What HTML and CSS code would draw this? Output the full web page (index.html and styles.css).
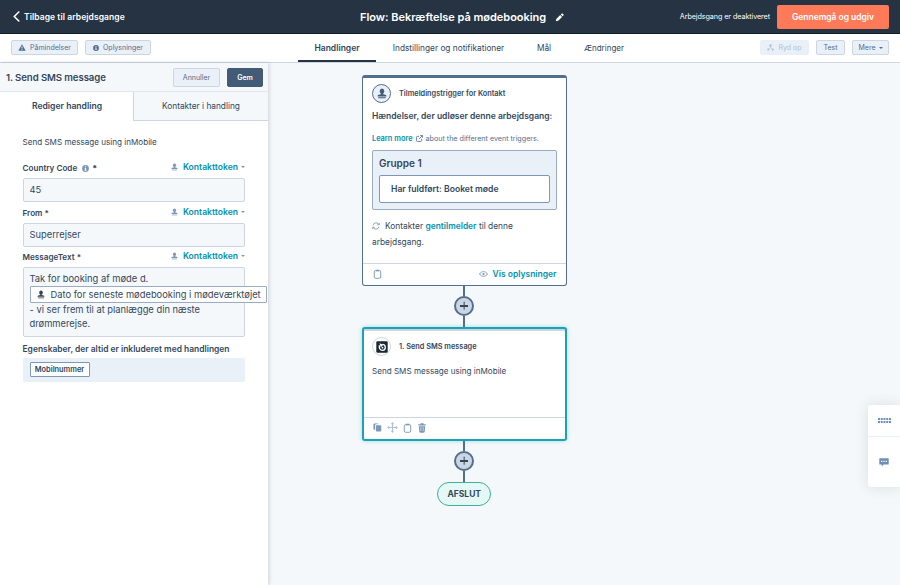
FILE: index.html
```html
<!DOCTYPE html>
<html lang="da">
<head>
    <meta charset="UTF-8">
    <meta name="viewport" content="width=device-width, initial-scale=1.0">
    <title>Flow: Bekræftelse på mødebooking</title>
    <link rel="stylesheet" href="styles.css">
</head>
<body>
    <!-- Shared icons -->
    <svg class="sprite" width="0" height="0">
        <symbol id="person" viewBox="0 0 12 12">
            <ellipse cx="6" cy="3.200" rx="2.700" ry="3.100" fill="currentColor"/>
            <path d="M4.700 5.500h2.600v1.300l2.600.6c1 .3 1.400.8 1.400 2.100H.7c0-1.300.4-1.800 1.400-2.100l2.600-.6z" fill="currentColor"/>
            <path d="M1.500 10.500h9v1.200h-9z" fill="currentColor"/>
        </symbol>
        <symbol id="info" viewBox="0 0 12 12">
            <circle cx="6" cy="6" r="5.800" fill="currentColor"/>
            <path d="M5 2.300h2v1.700H5zM4.500 5h2.500v3.500h.8v1.200H4.300V8.500H5V6.200h-.5z" fill="#fff"/>
        </symbol>
        <symbol id="clipboard" viewBox="0 0 12 14">
            <rect x="1.500" y="2.300" width="9" height="10.700" rx="1.800" fill="none" stroke="currentColor" stroke-width="1.300"/>
            <path d="M3.500 1h5v2.200h-5z" fill="currentColor"/>
        </symbol>
    </svg>

    <header class="topbar">
        <a class="back" href="#">
            <svg width="7" height="11" viewBox="0 0 7 11"><path d="M5.800 1 1.300 5.500l4.500 4.500" fill="none" stroke="currentColor" stroke-width="1.600" stroke-linecap="round"/></svg>
            <span>Tilbage til arbejdsgange</span>
        </a>
        <h1 class="flow-title">
            <span>Flow: Bekræftelse på mødebooking</span>
            <svg width="9" height="9" viewBox="0 0 9 9"><path d="M.8 8.300l.5-2.400 3.900-3.900 1.900 1.900-3.900 3.900zM5.800 1.400l.7-.7c.4-.4.9-.4 1.300 0l.6.6c.4.4.4.9 0 1.300l-.7.7z" fill="currentColor"/></svg>
        </h1>
        <div class="publish">
            <span class="status">Arbejdsgang er deaktiveret</span>
            <button class="btn-publish">Gennemgå og udgiv</button>
        </div>
    </header>

    <nav class="subnav">
        <div class="subnav-left">
            <button class="btn btn-reminders">
                <svg width="8" height="7" viewBox="0 0 12 11"><path d="M6 .3 11.800 10.700H.2z" fill="currentColor"/><path d="M5.300 4h1.400v3.200H5.300zM5.300 8.200h1.400v1.400H5.300z" fill="#fff"/></svg>
                <span>Påmindelser</span>
            </button>
            <button class="btn btn-details">
                <svg width="6" height="6"><use href="#info"/></svg>
                <span>Oplysninger</span>
            </button>
        </div>
        <div class="tabs">
            <a class="tab tab-actions active" href="#"><span>Handlinger</span></a>
            <a class="tab tab-settings" href="#"><span>Indstillinger og notifikationer</span></a>
            <a class="tab tab-goals" href="#"><span>Mål</span></a>
            <a class="tab tab-changes" href="#"><span>Ændringer</span></a>
        </div>
        <div class="subnav-right">
            <button class="btn btn-clean" disabled>
                <svg width="7" height="7" viewBox="0 0 10 10"><g fill="currentColor"><circle cx="5" cy="2" r="1.800"/><circle cx="1.800" cy="8" r="1.600"/><circle cx="8.200" cy="8" r="1.600"/></g><path d="M5 2v3M1.800 8 5 5l3.200 3" fill="none" stroke="currentColor"/></svg>
                <span>Ryd op</span>
            </button>
            <button class="btn btn-test"><span>Test</span></button>
            <button class="btn btn-more"><span>Mere</span><i class="caret"></i></button>
        </div>
    </nav>

    <main class="workspace">
        <aside class="panel">
            <div class="panel-header">
                <h2>1. Send SMS message</h2>
                <button class="btn btn-cancel"><span>Annuller</span></button>
                <button class="btn btn-save"><span>Gem</span></button>
            </div>
            <div class="panel-tabs">
                <a class="panel-tab active" href="#"><span>Rediger handling</span></a>
                <a class="panel-tab" href="#"><span>Kontakter i handling</span></a>
            </div>
            <form class="panel-form">
                <p class="intro">Send SMS message using inMobile</p>

                <div class="field-label">
                    <label>Country Code</label>
                    <svg class="label-info" width="7" height="7"><use href="#info"/></svg>
                    <b>*</b>
                    <a class="token" href="#"><svg width="7" height="8"><use href="#person"/></svg><span>Kontakttoken</span><i class="caret"></i></a>
                </div>
                <div class="input input-code">45</div>

                <div class="field-label">
                    <label>From *</label>
                    <a class="token" href="#"><svg width="7" height="8"><use href="#person"/></svg><span>Kontakttoken</span><i class="caret"></i></a>
                </div>
                <div class="input">Superrejser</div>

                <div class="field-label">
                    <label>MessageText *</label>
                    <a class="token" href="#"><svg width="7" height="8"><use href="#person"/></svg><span>Kontakttoken</span><i class="caret"></i></a>
                </div>
                <div class="input message">
                    <p>Tak for booking af møde d.</p>
                    <div class="message-token"><svg width="8" height="9"><use href="#person"/></svg><span>Dato for seneste mødebooking i mødeværktøjet</span></div>
                    <p>- vi ser frem til at planlægge din næste</p>
                    <p>drømmerejse.</p>
                </div>

                <div class="field-label included">
                    <label>Egenskaber, der altid er inkluderet med handlingen</label>
                </div>
                <div class="properties"><span class="property">Mobilnummer</span></div>
            </form>
        </aside>

        <section class="canvas">
            <div class="flow">
                <article class="card trigger">
                    <div class="card-header">
                        <div class="avatar"><svg width="10" height="11"><use href="#person"/></svg></div>
                        <h3>Tilmeldingstrigger for Kontakt</h3>
                    </div>
                    <h4>Hændelser, der udløser denne arbejdsgang:</h4>
                    <p class="learn">
                        <a href="#">Learn more</a>
                        <svg width="7" height="7" viewBox="0 0 10 10" fill="none" stroke="currentColor" stroke-width="1.200"><path d="M4.500 2H2a1.200 1.200 0 0 0-1.200 1.200V8A1.200 1.200 0 0 0 2 9.200h4.800A1.200 1.200 0 0 0 8 8V5.500M6 .8h3.200V4M9.200.8 4.200 5.800"/></svg>
                        <span>about the different event triggers.</span>
                    </p>
                    <div class="group">
                        <h5>Gruppe 1</h5>
                        <div class="condition">Har fuldført: Booket møde</div>
                    </div>
                    <div class="reenroll">
                        <p>
                            <svg width="8" height="8" viewBox="0 0 10 10" fill="none" stroke="currentColor" stroke-width="1.100"><path d="M1.200 4.200A4 4 0 0 1 8 2.300L9 3.400M9 1v2.400H6.600M8.800 5.800A4 4 0 0 1 2 7.700L1 6.600M1 9V6.600h2.400"/></svg>
                            <span>Kontakter</span>
                            <a href="#">gentilmelder</a>
                            <span>til denne</span>
                        </p>
                        <p>arbejdsgang.</p>
                    </div>
                    <footer class="card-footer">
                        <svg width="9" height="10"><use href="#clipboard"/></svg>
                        <a class="details" href="#">
                            <svg width="9" height="6" viewBox="0 0 12 8"><path d="M.7 4C3.200-.2 8.800-.2 11.300 4 8.800 8.200 3.200 8.200.7 4z" fill="none" stroke="currentColor" stroke-width="1.200"/><circle cx="6" cy="4" r="1.500" fill="currentColor"/></svg>
                            <span>Vis oplysninger</span>
                        </a>
                    </footer>
                </article>

                <i class="line line-top"></i>
                <button class="plus" aria-label="+"></button>
                <i class="line"></i>

                <article class="card action">
                    <div class="card-header">
                        <div class="avatar logo">
                            <svg width="12" height="12" viewBox="0 0 12 12"><rect x=".3" y=".3" width="11.400" height="11.400" rx="1.200" fill="#192733"/><path d="M3.300 4.300C3 7.500 4.300 9.300 6.300 9.300c1.800 0 3-1.200 3-2.900 0-1.800-1.200-3-2.900-3" fill="none" stroke="#fff" stroke-width="1.300"/><path d="M3.500 2.300l3.800 1.500-2.500 2.400z" fill="#fff"/><circle cx="6.500" cy="6.700" r=".9" fill="#fff"/></svg>
                        </div>
                        <h3>1. Send SMS message</h3>
                    </div>
                    <p class="action-text">Send SMS message using inMobile</p>
                    <footer class="card-footer">
                        <svg width="9" height="9" viewBox="0 0 10 10"><path d="M1.500.5h4.300v1H3.500A1.200 1.200 0 0 0 2.300 2.700v4.800h-.8a1 1 0 0 1-1-1v-5a1 1 0 0 1 1-1z" fill="currentColor"/><rect x="3.200" y="2.400" width="6" height="7" rx="1" fill="currentColor"/></svg>
                        <svg class="move" width="11" height="11" viewBox="0 0 12 12"><path d="M6 1.500v9M1.500 6h9" stroke="currentColor" stroke-width="1.100"/><path d="M6 0l2 2.400H4zM6 12l2-2.400H4zM0 6l2.400-2v4zM12 6 9.600 4v4z" fill="currentColor"/></svg>
                        <svg width="9" height="10"><use href="#clipboard"/></svg>
                        <svg class="trash" width="8" height="10" viewBox="0 0 8 10"><path d="M2.600.3h2.800l.4 1h1.900v1.300H.3V1.300h1.900zM.8 3.200h6.400l-.5 5.500c-.1.7-.5 1-1.100 1H2.400c-.6 0-1-.3-1.100-1z" fill="currentColor"/><path d="M2.800 4.300v3.600M5.200 4.300v3.600" stroke="#fff" stroke-width=".6"/></svg>
                    </footer>
                </article>

                <i class="line line-top"></i>
                <button class="plus" aria-label="+"></button>
                <i class="line"></i>
                <div class="end"><span>AFSLUT</span></div>
            </div>
        </section>
    </main>

    <div class="dock">
        <div class="dock-grid"><svg width="13" height="5" viewBox="0 0 13 5"><path d="M0 1h13M0 4h13" stroke="currentColor" stroke-width="2" stroke-dasharray="2 .75"/></svg></div>
        <div class="dock-chat"><svg width="10" height="9" viewBox="0 0 10 9"><path d="M.8.3h8.400a.5.5 0 0 1 .5.5v5.200a.5.5 0 0 1-.5.5H4.600L2.700 8.600V6.500H.8a.5.5 0 0 1-.5-.5V.8A.5.5 0 0 1 .8.3z" fill="currentColor"/><path d="M2 3.400h1.300M4.300 3.400h1.300M6.600 3.400h1.300" stroke="#fff" stroke-width="1.200"/></svg></div>
    </div>
</body>
</html>
```

FILE: styles.css
```css
* {
    box-sizing: border-box;
}

body {
    margin: 0;
    height: 585px;
    overflow: hidden;
    display: flex;
    flex-direction: column;
    font-family: Inter, "Noto Sans", sans-serif;
    font-size: 8px;
    color: #33475b;
    background-color: #f4f8fa;
}

h1, h2, h3, h4, h5, p {
    margin: 0;
    white-space: nowrap;
}

a {
    color: inherit;
    text-decoration: none;
}

button {
    font-family: inherit;
    padding: 0;
    white-space: nowrap;
}

svg {
    flex: none;
    display: block;
}

span, label {
    white-space: nowrap;
}

.sprite {
    position: absolute;
}

/* Top bar */
.topbar {
    height: 34px;
    flex: none;
    display: grid;
    grid-template-columns: 360px 1fr auto;
    align-items: center;
    background-color: #253342;
    border-bottom: 1px solid #0f1f30;
    color: #fff;
}

.back {
    display: flex;
    align-items: center;
    gap: 4px;
    padding-left: 13px;
    font-size: 8.500px;
    font-weight: 600;
    letter-spacing: 0.07px;
}

.flow-title {
    display: flex;
    align-items: center;
    gap: 9px;
    padding-top: 1px;
    font-size: 11px;
    font-weight: 600;
    letter-spacing: -0.03px;
}

.publish {
    display: flex;
    align-items: center;
    gap: 7px;
    padding-right: 11px;
}

.status {
    font-size: 7.200px;
    letter-spacing: -0.08px;
}

.btn-publish {
    width: 112px;
    height: 24px;
    border: none;
    border-radius: 2px;
    background-color: #ff7a59;
    color: #fff;
    font-size: 8.500px;
    font-weight: 600;
    letter-spacing: -0.03px;
}

/* Second bar */
.subnav {
    height: 29px;
    flex: none;
    display: grid;
    grid-template-columns: 298px 1fr auto;
    background-color: #fff;
    border-bottom: 1px solid #cbd6e2;
}

.subnav-left, .subnav-right {
    display: flex;
    align-items: flex-start;
    gap: 7px;
    padding-top: 6px;
}

.subnav-left {
    padding-left: 11px;
}

.subnav-right {
    padding-right: 11px;
}

.btn {
    display: flex;
    align-items: center;
    justify-content: center;
    gap: 4px;
    height: 15px;
    border: 1px solid #cbd6e2;
    border-radius: 2px;
    background-color: #eaf0f8;
    color: #506e91;
    font-size: 7px;
}

.btn-reminders {
    width: 67px;
}

.btn-details {
    width: 66px;
}

.btn-clean {
    width: 49px;
    border-color: #eaf0f8;
    color: #b0c1d4;
}

.btn-test {
    width: 29px;
}

.btn-more {
    width: 37px;
    gap: 3px;
}

.caret {
    border: 2px solid transparent;
    border-top-color: currentColor;
    border-bottom: 0;
}

.tabs {
    display: flex;
}

.tab {
    height: 28px;
    display: flex;
    align-items: center;
    justify-content: center;
    font-size: 8.300px;
}

.tab-actions {
    width: 78px;
}

.tab-settings {
    width: 145px;
}

.tab-goals {
    width: 46px;
}

.tab-changes {
    width: 74px;
    font-size: 8px;
}

.tab.active {
    font-size: 8.500px;
    font-weight: 600;
    border-bottom: 2px solid #253342;
    padding-top: 2px;
}

/* Left panel */
.workspace {
    flex: 1;
    display: flex;
}

.panel {
    width: 268px;
    flex: none;
    background-color: #fff;
    box-shadow: 1px 0 4px rgba(45, 62, 80, 0.2);
}

.panel-header {
    height: 29px;
    display: flex;
    align-items: center;
    padding: 0 5px 0 6px;
    background-color: #f5f8fa;
    border-bottom: 1px solid #dfe6ee;
}

.panel-header h2 {
    margin-right: auto;
    font-size: 9.600px;
    font-weight: 600;
    letter-spacing: -0.08px;
}

.btn-cancel, .btn-save {
    height: 19px;
}

.btn-cancel {
    width: 47px;
}

.btn-save {
    width: 36px;
    margin-left: 7px;
    border-color: #425b76;
    background-color: #425b76;
    color: #fff;
    font-weight: 600;
}

.panel-tabs {
    display: flex;
    height: 29px;
}

.panel-tab {
    width: 135px;
    display: flex;
    align-items: center;
    justify-content: center;
    font-size: 8.300px;
    border-left: 1px solid #cbd6e2;
    border-bottom: 1px solid #cbd6e2;
    background-color: #f5f8fa;
}

.panel-tab.active {
    width: 133px;
    font-size: 8.600px;
    font-weight: 600;
    border-color: transparent;
    background-color: #fff;
}

.panel-form {
    padding: 14px 23px 0 22.500px;
}

.intro {
    height: 23px;
    font-size: 8.100px;
    line-height: 15px;
}

.field-label {
    height: 20px;
    display: flex;
    align-items: center;
    font-size: 8.150px;
    font-weight: 600;
}

.input-code + .field-label {
    height: 21px;
}

.label-info {
    margin: 0 3px 0 5px;
    color: #7c98b6;
}

.token {
    display: flex;
    align-items: center;
    gap: 5px;
    margin-left: auto;
    padding-bottom: 2px;
    color: #0091ae;
    font-size: 8.600px;
}

.token svg, .token .caret {
    color: #7c98b6;
}

.token .caret {
    margin-left: -2px;
}

.input {
    height: 24px;
    padding: 0 6px;
    border: 1px solid #cbd6e2;
    border-radius: 2px;
    background-color: #f5f8fa;
    font-size: 9.350px;
    line-height: 22px;
}

.message {
    height: 70px;
    padding-top: 4px;
    line-height: 14px;
}

.message-token {
    width: 237px;
    height: 17px;
    display: flex;
    align-items: center;
    gap: 6px;
    padding-left: 6px;
    border: 1px solid #99acc2;
    border-radius: 1px;
    background-color: #fff;
}

.included {
    height: 21px;
    padding-top: 3px;
    font-size: 8.450px;
}

.properties {
    height: 24px;
    padding: 4px 7px;
    background-color: #eaf0f8;
    border-radius: 2px;
}

.property {
    display: flex;
    align-items: center;
    justify-content: center;
    width: 60px;
    height: 15px;
    border: 1px solid #7c98b6;
    border-radius: 1px;
    background-color: #fff;
    font-size: 7.400px;
    font-weight: 600;
}

/* Flow canvas */
.canvas {
    flex: 1;
    padding: 12px 0 0 94px;
}

.flow {
    width: 204.500px;
    display: flex;
    flex-direction: column;
    align-items: center;
}

.card {
    width: 100%;
    display: flex;
    flex-direction: column;
    padding: 0 9px;
    border: 1px solid #516f90;
    border-radius: 3px;
    background-color: #fff;
}

.trigger {
    height: 211px;
    border-top-width: 3px;
}

.card-header {
    height: 31px;
    display: flex;
    align-items: center;
    gap: 8px;
}

.card-header h3 {
    font-size: 7.350px;
    font-weight: 600;
}

.avatar {
    width: 19px;
    height: 19px;
    display: flex;
    align-items: center;
    justify-content: center;
    padding-bottom: 1px;
    border: 1px solid #516f90;
    border-radius: 50%;
    background-color: #eaf0f8;
    color: #425b76;
}

.card h4 {
    height: 16px;
    font-size: 8.500px;
    font-weight: 600;
    line-height: 15px;
}

.learn {
    height: 24px;
    display: flex;
    align-items: center;
    gap: 3px;
    padding-top: 3px;
    font-size: 7.150px;
    color: #516f90;
}

.learn a {
    font-size: 7.400px;
    font-weight: 600;
    color: #0091ae;
}

.group {
    height: 60px;
    padding: 5px 6px;
    margin-top: 1px;
    border: 1px solid #99acc2;
    border-radius: 2px;
    background-color: #eaf0f8;
}

.group h5 {
    height: 19px;
    font-size: 10px;
    font-weight: 600;
    line-height: 15px;
}

.condition {
    height: 28px;
    padding-left: 11px;
    border: 1px solid #7c98b6;
    border-radius: 2px;
    background-color: #fff;
    font-size: 8.600px;
    font-weight: 600;
    line-height: 26px;
}

.reenroll {
    padding-top: 8px;
    font-size: 8.400px;
    line-height: 16px;
}

.reenroll p {
    display: flex;
    align-items: center;
}

.reenroll svg {
    margin-right: 5px;
    color: #7c98b6;
}

.reenroll a {
    margin: 0 2.500px;
    color: #0091ae;
    font-weight: 600;
}

.card-footer {
    height: 22px;
    display: flex;
    align-items: center;
    gap: 5px;
    margin: auto -9px 0;
    padding: 0 9px 2px 10px;
    border-top: 1px solid #cbd6e2;
    color: #7c98b6;
}

.details {
    display: flex;
    align-items: center;
    gap: 4px;
    margin-left: auto;
    font-size: 8.500px;
    font-weight: 600;
}

.details span {
    color: #0091ae;
}

.line {
    width: 2px;
    height: 11px;
    background-color: #516f90;
}

.line-top {
    height: 10px;
}

.plus {
    display: grid;
    place-content: center;
    place-items: center;
    width: 20px;
    height: 20px;
    border: 2px solid #516f90;
    border-radius: 50%;
    background-color: #cbd6e2;
}

.plus::before, .plus::after {
    content: "";
    grid-area: 1 / 1;
    width: 8px;
    height: 1.300px;
    background-color: #33475b;
}

.plus::after {
    transform: rotate(90deg);
}

.action {
    height: 114px;
    padding: 0 8px;
    border: 2px solid #19a3b5;
    box-shadow: inset 0 2px #cbd6e2, 0 0 4px rgba(0, 164, 189, 0.35);
}

.action .card-header {
    height: 35px;
}

.logo {
    padding-bottom: 0;
    border-color: #cbd6e2;
    background-color: #fff;
}

.action-text {
    font-size: 8.100px;
    line-height: 14px;
}

.action .card-footer {
    margin: auto -8px 0;
    padding-left: 9px;
}

.move {
    color: #b0c1d4;
}

.trash {
    margin-left: 1px;
}

.end {
    display: flex;
    align-items: center;
    justify-content: center;
    width: 54px;
    height: 24px;
    border: 1px solid #39b39a;
    border-radius: 12px;
    background-color: #e5f8f5;
    font-size: 8.500px;
    font-weight: 700;
}

/* Floating help dock */
.dock {
    position: fixed;
    top: 405px;
    right: 0;
    width: 32px;
    height: 82px;
    border-radius: 4px 0 0 4px;
    background-color: #fff;
    box-shadow: 0 0 14px rgba(45, 62, 80, 0.14);
    color: #6f8fb3;
}

.dock-grid, .dock-chat {
    display: flex;
    align-items: center;
    justify-content: center;
}

.dock-grid {
    height: 32px;
    border-bottom: 1px solid #eaf0f6;
}

.dock-chat {
    height: 50px;
}
```
